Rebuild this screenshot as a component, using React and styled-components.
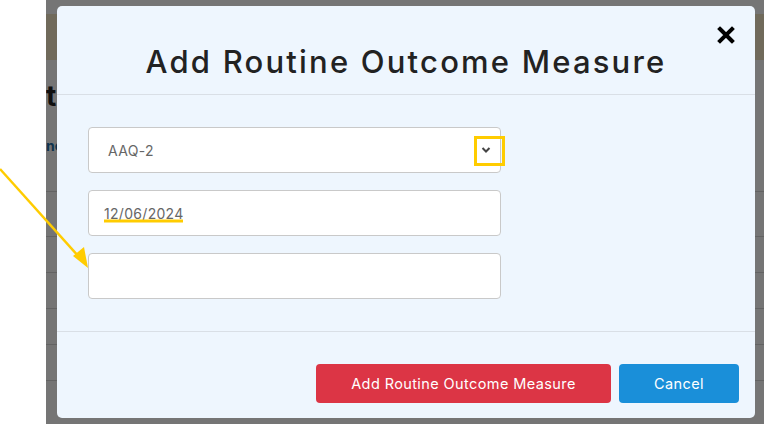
import React from 'react';
import styled, { createGlobalStyle } from 'styled-components';

const GlobalStyle = createGlobalStyle`
  html, body {
    margin: 0;
    padding: 0;
    background: #fff;
  }
  body {
    font-family: Inter, "Open Sans", sans-serif;
  }
`;

const Screen = styled.div`
  position: relative;
  display: flex;
  width: 764px;
  height: 424px;
  overflow: hidden;
`;

const Gutter = styled.div`
  width: 46px;
  flex-shrink: 0;
  background: #fff;
`;

const Main = styled.div`
  position: relative;
  flex: 1;
  background: #fff;
  overflow: hidden;
`;

const Banner = styled.div`
  height: 46px;
  margin-top: 14px;
  background: #f4e7c6;
`;

const PageTitle = styled.h1`
  margin: 22px 0 0;
  font: 700 28px/1 Inter, sans-serif;
  color: #222;
`;

const PageLink = styled.a`
  display: block;
  margin-top: 29px;
  font: 700 14px/1 Inter, sans-serif;
  color: #1f6fa8;
`;

const TableRows = styled.div`
  margin-top: 38px;
`;

const TableRow = styled.div`
  height: ${(p) => p.$h}px;
  border-bottom: 1px solid #d7d7d7;
`;

const Overlay = styled.div`
  position: absolute;
  inset: 0;
  background: rgba(0, 0, 0, 0.54);
  padding: 6px 9px 0 11px;
`;

const Modal = styled.div`
  position: relative;
  width: 698px;
  height: 412px;
  background: #eef6fe;
  border-radius: 5px;
  display: flex;
  flex-direction: column;
  font-family: Inter, sans-serif;
`;

const Header = styled.div`
  height: 89px;
  border-bottom: 1px solid #d9dfe6;
  display: flex;
  align-items: center;
  justify-content: center;
  box-sizing: border-box;
`;

const Title = styled.h2`
  margin: 22px 0 0;
  font-size: 31px;
  font-weight: 500;
  color: #222;
  letter-spacing: 2.2px;
`;

const Close = styled.button`
  position: absolute;
  top: 19px;
  right: 19px;
  width: 20px;
  height: 20px;
  padding: 0;
  border: none;
  background: none;
  display: flex;
  align-items: center;
  justify-content: center;
`;

const Body = styled.div`
  padding: 32px 31px 32px;
  display: flex;
  flex-direction: column;
  gap: 17px;
  border-bottom: 1px solid #d9dfe6;
`;

const Field = styled.div`
  position: relative;
  width: 413px;
  height: 46px;
  box-sizing: border-box;
  background: #fff;
  border: 1px solid #c9c9c9;
  border-radius: 4px;
  display: flex;
  align-items: center;
  padding-left: ${(p) => p.$pad}px;
  font-size: 14px;
  color: #666;
  letter-spacing: 0.3px;
`;

const Chevron = styled.span`
  position: absolute;
  right: 9px;
  top: 50%;
  transform: translateY(-50%);
  display: flex;
`;

const Footer = styled.div`
  flex: 1;
  display: flex;
  justify-content: flex-end;
  align-items: flex-start;
  gap: 8px;
  padding: 32px 16px 0 0;
`;

const Button = styled.button`
  height: 39px;
  width: ${(p) => p.$w}px;
  border: none;
  border-radius: 4px;
  background: ${(p) => p.$bg};
  color: #fff;
  font-family: Inter, sans-serif;
  font-size: 14.5px;
  font-weight: 400;
  letter-spacing: 0.4px;
`;

const Annotations = styled.svg`
  position: absolute;
  inset: 0;
  pointer-events: none;
`;

const rowHeights = [0, 44, 35, 35, 35, 35];

export default function App() {
  return (
    <>
      <GlobalStyle />
      <Screen>
        <Gutter />
        <Main>
          <Banner />
          <PageTitle>t</PageTitle>
          <PageLink>ne</PageLink>
          <TableRows>
            {rowHeights.map((h, i) => (
              <TableRow key={i} $h={h} />
            ))}
          </TableRows>
          <Overlay>
            <Modal>
              <Close aria-label="Close">
                <svg width="18" height="18" viewBox="0 0 18 18">
                  <path d="M3 3 L15 15 M15 3 L3 15" stroke="#000" strokeWidth="4" strokeLinecap="square" />
                </svg>
              </Close>
              <Header>
                <Title>Add Routine Outcome Measure</Title>
              </Header>
              <Body>
                <Field $pad={19}>
                  AAQ-2
                  <Chevron>
                    <svg width="10" height="7" viewBox="0 0 10 7">
                      <path d="M1.5 1.5 L5 5 L8.5 1.5" fill="none" stroke="#444" strokeWidth="2" />
                    </svg>
                  </Chevron>
                </Field>
                <Field $pad={15}>12/06/2024</Field>
                <Field $pad={15} />
              </Body>
              <Footer>
                <Button $w={295} $bg="#dc3545">Add Routine Outcome Measure</Button>
                <Button $w={120} $bg="#1a8fd9">Cancel</Button>
              </Footer>
            </Modal>
          </Overlay>
        </Main>
        <Annotations width="764" height="424">
          <rect x="475.5" y="137.5" width="28" height="27" fill="none" stroke="#ffcc00" strokeWidth="3" />
          <line x1="104" y1="221" x2="183" y2="221" stroke="#ffcc00" strokeWidth="3" />
          <line x1="0" y1="169" x2="80" y2="258" stroke="#ffcc00" strokeWidth="2.5" />
          <polygon points="88,268 73,256 84,247" fill="#ffcc00" />
        </Annotations>
      </Screen>
    </>
  );
}
